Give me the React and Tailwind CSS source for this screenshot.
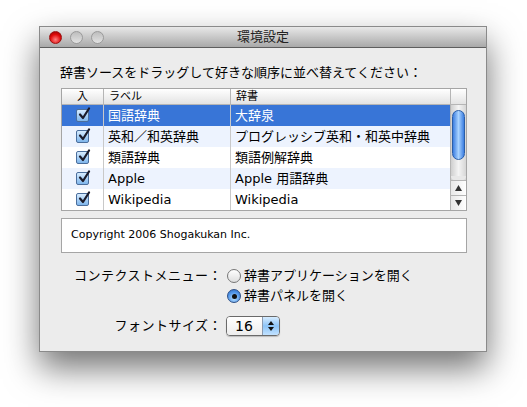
import React from "react";

const font = {
  fontFamily: '"DejaVu Sans", "Noto Sans CJK JP", sans-serif',
};

const rows = [
  { label: "国語辞典", dict: "大辞泉", selected: true },
  { label: "英和／和英辞典", dict: "プログレッシブ英和・和英中辞典" },
  { label: "類語辞典", dict: "類語例解辞典" },
  { label: "Apple", dict: "Apple 用語辞典" },
  { label: "Wikipedia", dict: "Wikipedia" },
];

function Check() {
  return (
    <div className="w-[13px] h-[13px] rounded-[2px] border border-[#4b6e9c] bg-gradient-to-b from-[#d7ecff] to-[#7fb6ec] relative">
      <svg viewBox="0 0 14 14" className="absolute left-[0px] top-[-3px] w-[14px] h-[14px]">
        <path d="M3 7.5 L6 11 L12 1.5" fill="none" stroke="#1b1b2a" strokeWidth="2.2" strokeLinecap="round" strokeLinejoin="round" />
      </svg>
    </div>
  );
}

function Light({ red }) {
  return red ? (
    <div className="w-[13px] h-[13px] rounded-full bg-[radial-gradient(circle_at_50%_70%,#ff8080,#e00a0a_55%,#8a0000)] border border-[#9b1010]" />
  ) : (
    <div className="w-[13px] h-[13px] rounded-full bg-gradient-to-b from-[#bdbdbd] to-[#e2e2e2] border border-[#9a9a9a]" />
  );
}

export default function App() {
  return (
    <div className="w-[527px] h-[407px] bg-white overflow-hidden pt-[26px] pl-[39px]" style={font}>
      <div className="w-[448px] h-[326px] bg-[#ececec] border border-[#8a8a8a] shadow-[0_16px_32px_rgba(0,0,0,0.55)] flex flex-col">
        {/* Title bar */}
        <div className="h-[21px] bg-gradient-to-b from-[#e8e8e8] to-[#a9a9a9] border-b border-[#5e5e5e] flex items-center relative shrink-0">
          <div className="flex gap-[8px] pl-[9px]">
            <Light red />
            <Light />
            <Light />
          </div>
          <div className="absolute inset-0 flex items-center justify-center text-[13px] text-[#222]">環境設定</div>
        </div>

        <div className="flex flex-col pl-[20px] pr-[19px] pt-[16px]">
          <div className="text-[13px] leading-[17px] text-black">辞書ソースをドラッグして好きな順序に並べ替えてください：</div>

          {/* Table */}
          <div className="mt-[7px] ml-[1px] border border-[#a5a5a5] bg-white flex">
            <div className="flex-1 flex flex-col">
              <div className="h-[16px] flex text-[11px] leading-[15px] text-black bg-gradient-to-b from-white via-[#f1f1f1] to-[#e3e3e3] border-b border-[#b5b5b5]">
                <div className="w-[42px] text-center border-r border-[#b5b5b5]">入</div>
                <div className="w-[127px] pl-[5px] border-r border-[#b5b5b5]">ラベル</div>
                <div className="flex-1 pl-[5px]">辞書</div>
              </div>
              {rows.map((r, i) => (
                <div
                  key={i}
                  className={
                    "h-[21px] flex items-center text-[13px] " +
                    (r.selected ? "bg-[#3875d7] text-white" : i % 2 === 1 ? "bg-[#edf3fe] text-black" : "bg-white text-black")
                  }
                >
                  <div className="w-[42px] h-full flex items-center justify-center border-r border-[#c9c9c9]">
                    <Check />
                  </div>
                  <div className="w-[127px] h-full flex items-center pl-[4px] border-r border-[#c9c9c9] whitespace-nowrap">{r.label}</div>
                  <div className="flex-1 h-full flex items-center pl-[4px] whitespace-nowrap">{r.dict}</div>
                </div>
              ))}
            </div>
            {/* Scrollbar */}
            <div className="w-[16px] flex flex-col border-l border-[#b5b5b5]">
              <div className="h-[16px] bg-gradient-to-b from-white via-[#f1f1f1] to-[#e3e3e3] border-b border-[#b5b5b5]" />
              <div className="flex-1 bg-gradient-to-r from-[#cfcfcf] via-[#f4f4f4] to-[#d6d6d6] flex flex-col items-center">
                <div className="mt-[5px] w-[13px] h-[50px] rounded-full border border-[#2a5ea8] bg-gradient-to-r from-[#3b7de0] via-[#a9d3ff] to-[#3b7de0]" />
                <div className="flex-1" />
                <div className="w-full h-[4px] rounded-b-full bg-[#e8e8e8]" />
                <div className="w-full h-[15px] border-t border-[#b5b5b5] bg-gradient-to-r from-[#e8e8e8] to-white flex items-center justify-center">
                  <svg width="7" height="6" viewBox="0 0 7 6"><path d="M3.5 0 L7 6 L0 6Z" fill="#333" /></svg>
                </div>
                <div className="w-full h-[15px] border-t border-[#b5b5b5] bg-gradient-to-r from-[#e8e8e8] to-white flex items-center justify-center">
                  <svg width="7" height="6" viewBox="0 0 7 6"><path d="M0 0 L7 0 L3.5 6Z" fill="#333" /></svg>
                </div>
              </div>
            </div>
          </div>

          {/* Copyright */}
          <div className="mt-[7px] ml-[1px] h-[35px] border border-[#a5a5a5] bg-white flex items-center pl-[9px] text-[11px] text-black">
            Copyright 2006 Shogakukan Inc.
          </div>

          {/* Context menu */}
          <div className="mt-[13px] flex">
            <div className="w-[162px] text-right text-[13px] leading-[20px] tracking-[0.5px]">コンテクストメニュー：</div>
            <div className="ml-[5px] flex flex-col">
              <div className="h-[20px] flex items-center gap-[3px] text-[13px]">
                <div className="w-[14px] h-[14px] rounded-full border border-[#777] bg-gradient-to-b from-white to-[#dedede]" />
                <span>辞書アプリケーションを開く</span>
              </div>
              <div className="h-[20px] flex items-center gap-[3px] text-[13px]">
                <div className="w-[14px] h-[14px] rounded-full border border-[#2c4f86] bg-[radial-gradient(circle_at_50%_70%,#b9e0ff,#4f94e8_60%,#2d68c0)] flex items-center justify-center">
                  <div className="w-[5px] h-[5px] rounded-full bg-[#111]" />
                </div>
                <span>辞書パネルを開く</span>
              </div>
            </div>
          </div>

          {/* Font size */}
          <div className="mt-[10px] flex items-center">
            <div className="w-[162px] text-right text-[13px] tracking-[0.5px]">フォントサイズ：</div>
            <div className="ml-[4px] w-[54px] h-[20px] rounded-[4px] border border-[#6a6a6a] flex overflow-hidden shadow-[0_1px_1px_rgba(0,0,0,0.2)]">
              <div className="flex-1 bg-gradient-to-b from-white to-[#ededed] flex items-center pl-[8px] text-[14px]">16</div>
              <div className="w-[17px] bg-gradient-to-b from-[#d6ecff] via-[#8cc4f7] to-[#c2e2ff] border-l border-[#8a9ab0] flex flex-col items-center justify-center gap-[2px]">
                <svg width="6" height="4" viewBox="0 0 6 4"><path d="M3 0 L6 4 L0 4Z" fill="#111" /></svg>
                <svg width="6" height="4" viewBox="0 0 6 4"><path d="M0 0 L6 0 L3 4Z" fill="#111" /></svg>
              </div>
            </div>
          </div>
        </div>
      </div>
    </div>
  );
}
